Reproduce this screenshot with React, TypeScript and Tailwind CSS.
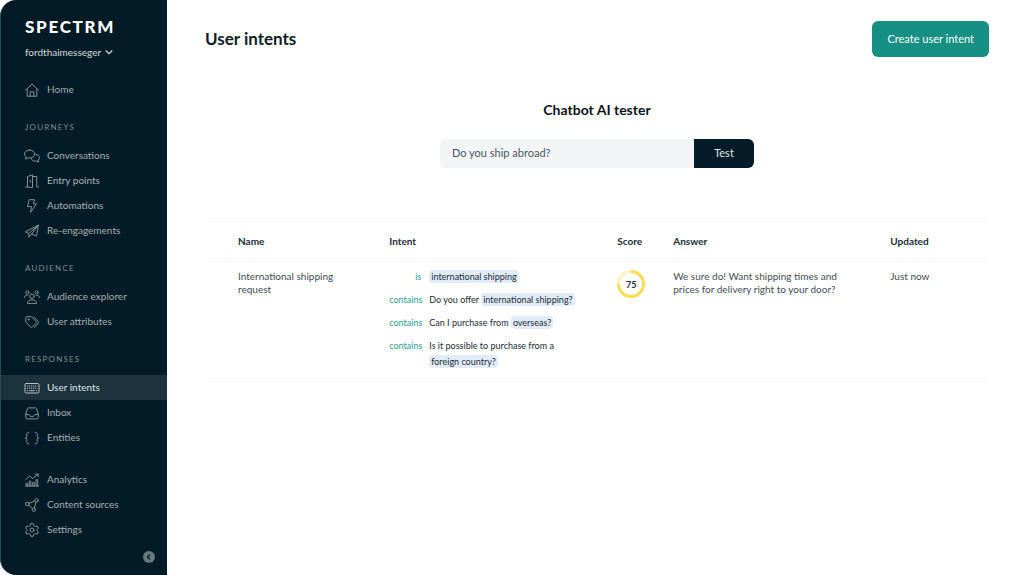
import { useState, type ReactNode } from 'react';

interface NavItem {
  label: string;
  icon: ReactNode;
}

interface NavGroup {
  title?: string;
  items: NavItem[];
}

interface Phrase {
  match: string;
  text: string;
  highlight: string;
}

const Icon = ({ children }: { children: ReactNode }) => (
  <svg
    viewBox="0 0 16 16"
    className="w-4 h-4 shrink-0 opacity-80"
    fill="none"
    stroke="currentColor"
    strokeWidth="1"
    strokeLinecap="round"
    strokeLinejoin="round"
    aria-hidden="true"
  >
    {children}
  </svg>
);

const navGroups: NavGroup[] = [
  {
    items: [
      {
        label: 'Home',
        icon: (
          <Icon>
            <path d="M1.500 8.200 8 2l6.500 6.200M3.200 7v7.200h9.600V7M6.200 14.200V9.800h3.600v4.400" />
          </Icon>
        ),
      },
    ],
  },
  {
    title: 'JOURNEYS',
    items: [
      {
        label: 'Conversations',
        icon: (
          <Icon>
            <path d="M5.500 2C2.800 2 .6 3.700 .6 6c0 1.200.6 2.200 1.500 2.900L1.600 11.200l2.500-1.400c.5.100.9.200 1.400.200 2.800 0 5-1.800 5-4s-2.200-4-5-4Z" />
            <path d="M11.800 6.300c2.100.2 3.700 1.600 3.700 3.300 0 1-.5 1.800-1.300 2.500l.4 2-2.200-1.100c-2.600.5-4.900-.7-5.300-2.500" />
          </Icon>
        ),
      },
      {
        label: 'Entry points',
        icon: (
          <Icon>
            <path d="M1.500 14h2V3.500l5-1.700v12.700L3.500 14M8.500 3.500h4.300V14h1.700M6.300 7.500v1.600" />
          </Icon>
        ),
      },
      {
        label: 'Automations',
        icon: (
          <Icon>
            <path d="M5.500 1.700h5L9.300 5.800h3.200L6.500 14.300l1-5.700H3.800Z" />
          </Icon>
        ),
      },
      {
        label: 'Re-engagements',
        icon: (
          <Icon>
            <path d="M14.300 2.200 1.300 8.800l3.500 1.700L14.300 2.200 12.600 13l-5-2M4.800 10.500v3.700l2.800-3.200 6.700-8.800" />
          </Icon>
        ),
      },
    ],
  },
  {
    title: 'AUDIENCE',
    items: [
      {
        label: 'Audience explorer',
        icon: (
          <Icon>
            <circle cx="8" cy="7.200" r="2.300" />
            <path d="M3.500 14.200c0-2.300 1.800-3.300 4.500-3.300s4.500 1 4.500 3.300Z" />
            <circle cx="3.300" cy="3.500" r="1.600" />
            <circle cx="12.700" cy="3.500" r="1.600" />
            <path d="M.5 8.500c0-1.700 1.200-2.400 3.200-2.400M15.500 8.500c0-1.700-1.200-2.400-3.200-2.400" />
          </Icon>
        ),
      },
      {
        label: 'User attributes',
        icon: (
          <Icon>
            <path d="M1.700 3.800c0-.7.500-1.200 1.200-1.200h3.800c.4 0 .8.200 1.100.5l4.200 4.200c.6.600.6 1.500 0 2.100l-3.400 3.400c-.6.600-1.500.6-2.100 0L2.200 8.500c-.3-.3-.5-.7-.5-1.100Z" />
            <path d="M9.700 2.900l4.300 4.300c.7.700.7 1.700 0 2.400l-3.700 3.700" />
            <circle cx="4.500" cy="5.400" r=".6" />
          </Icon>
        ),
      },
    ],
  },
  {
    title: 'RESPONSES',
    items: [
      {
        label: 'User intents',
        icon: (
          <Icon>
            <rect x="1" y="3.500" width="14" height="9.500" rx="1.200" />
            <path strokeLinecap="butt" strokeDasharray="1.200 .8" d="M3 6h10.200M3 8.200h10.200" />
            <path d="M3.300 10.700h.4M5.800 10.700h4.400M12.400 10.700h.4" />
          </Icon>
        ),
      },
      {
        label: 'Inbox',
        icon: (
          <Icon>
            <path d="M1.700 9.500 3.300 3.700c.2-.5.600-.8 1.100-.8h7.200c.5 0 .9.300 1.100.8l1.600 5.800v3.200c0 .7-.5 1.200-1.200 1.200H2.900c-.7 0-1.200-.5-1.200-1.200ZM1.700 9.500h3.200c.3 1.200 1.500 2 3.100 2s2.800-.8 3.100-2h3.200" />
          </Icon>
        ),
      },
      {
        label: 'Entities',
        icon: (
          <Icon>
            <path d="M5 2.200c-1.600 0-2.200.6-2.200 1.900v2.300c0 1-.6 1.600-1.900 1.600 1.300 0 1.900.6 1.900 1.600v2.300c0 1.300.6 1.900 2.200 1.900M11 2.200c1.600 0 2.200.6 2.200 1.900v2.300c0 1 .6 1.600 1.900 1.600-1.300 0-1.900.6-1.900 1.600v2.300c0 1.300-.6 1.900-2.200 1.900" />
          </Icon>
        ),
      },
    ],
  },
  {
    items: [
      {
        label: 'Analytics',
        icon: (
          <Icon>
            <path d="M1.800 7.500 5.700 4l3 2.500 5.500-4.300M11.500 2.200h2.700v2.500" />
            <path d="M2 14v-2.700h1.600V14M5.200 14V9.200h1.600V14M8.700 14v-3.500h1.600V14M12 14V7.700h1.700V14M1.500 14h13" />
          </Icon>
        ),
      },
      {
        label: 'Content sources',
        icon: (
          <Icon>
            <circle cx="3.200" cy="7" r="1.800" />
            <circle cx="12.500" cy="3.500" r="1.700" />
            <circle cx="9.800" cy="12.700" r="1.700" />
            <path d="M4.900 6.400 10.900 4M4.600 8.200l3.900 3.300M12 5.200l-1.700 5.900" />
          </Icon>
        ),
      },
      {
        label: 'Settings',
        icon: (
          <Icon>
            <path d="M6.700 1.700h2.600l.5 1.900 1.400.8 1.900-.5 1.300 2.200-1.400 1.400v1l1.400 1.400-1.300 2.200-1.900-.5-1.400.8-.5 1.900H6.700l-.5-1.900-1.400-.8-1.900.5-1.300-2.200L3 8.500v-1L1.600 6.100l1.300-2.200 1.900.5 1.400-.8Z" />
            <circle cx="8" cy="8" r="2" />
          </Icon>
        ),
      },
    ],
  },
];

const phrases: Phrase[] = [
  { match: 'is', text: '', highlight: 'international shipping' },
  { match: 'contains', text: 'Do you offer', highlight: 'international shipping?' },
  { match: 'contains', text: 'Can I purchase from', highlight: 'overseas?' },
  { match: 'contains', text: 'Is it possible to purchase from a', highlight: 'foreign country?' },
];

function ScoreRing({ score }: { score: number }) {
  return (
    <div className="relative w-7 h-7">
      <svg viewBox="0 0 28 28" className="w-7 h-7 -rotate-90" fill="none" strokeWidth="3" aria-hidden="true">
        <circle cx="14" cy="14" r="12.500" stroke="#fdf3c7" />
        <circle cx="14" cy="14" r="12.500" stroke="#fbdc55" pathLength="100" strokeDasharray={`${score} 100`} />
      </svg>
      <span className="absolute inset-0 flex items-center justify-center text-[9px] font-bold text-[#1b2b36]">
        {score}
      </span>
    </div>
  );
}

function Sidebar() {
  const [active, setActive] = useState('User intents');

  return (
    <aside className="w-[167px] shrink-0 flex flex-col bg-[#031b26] border-l border-[#2b4c57] rounded-l-2xl text-[#a3afb5]">
      <div className="pl-6 pt-4">
        <div className="text-[17px] leading-[22px] font-black tracking-widest text-white">SPECTRM</div>
        <button className="mt-1 flex items-center gap-1 text-[10px] leading-5 text-[#d5dbde]">
          fordthaimesseger
          <svg viewBox="0 0 8 8" className="w-2 h-2" fill="none" stroke="currentColor" strokeWidth="1.200" aria-hidden="true">
            <path d="M.7 2.500 4 5.700l3.300-3.200" />
          </svg>
        </button>
      </div>

      <nav className="mt-[15px]">
        {navGroups.map((group, index) => (
          <div key={index} className={index === navGroups.length - 1 ? 'mt-[17px]' : ''}>
            {group.title && (
              <h2 className="pl-6 pt-[17px] pb-2 text-[8px] leading-4 tracking-[0.15em] text-[#7d8d95]">
                {group.title}
              </h2>
            )}
            {group.items.map((item) => (
              <button
                key={item.label}
                onClick={() => setActive(item.label)}
                className={`w-full h-[25px] pl-[23px] flex items-center gap-[7px] text-[10px] ${
                  active === item.label ? 'bg-[#1c323d] text-[#dfe4e6]' : ''
                }`}
              >
                {item.icon}
                {item.label}
              </button>
            ))}
          </div>
        ))}
      </nav>

      <div className="flex justify-end pr-3 pt-[9px] pb-3">
        <button
          aria-label="Collapse sidebar"
          className="w-3 h-3 rounded-full bg-[#69777e] text-[#031b26] flex items-center justify-center"
        >
          <svg viewBox="0 0 8 8" className="w-2 h-2" fill="none" stroke="currentColor" strokeWidth="1.300" aria-hidden="true">
            <path d="M5 1.500 2.500 4 5 6.500" />
          </svg>
        </button>
      </div>
    </aside>
  );
}

export default function App() {
  const [question, setQuestion] = useState('Do you ship abroad?');

  return (
    <div className="min-h-screen flex bg-white font-['Lato','Liberation_Sans',sans-serif] text-[#1b2b36]">
      <Sidebar />

      <main className="flex-1 min-w-0 pt-[21px] pl-[38px] pr-[35px]">
        {/* Header */}
        <header className="flex items-center justify-between">
          <h1 className="text-[17px] font-bold text-[#101d25]">User intents</h1>
          <button className="h-9 px-[15px] rounded-md bg-[#168f84] text-[11px] text-white">
            Create user intent
          </button>
        </header>

        {/* Tester */}
        <section className="mt-[43px] flex flex-col items-center">
          <h2 className="text-[14px] leading-5 font-bold text-[#0b1319]">Chatbot AI tester</h2>
          <form className="mt-[19px] flex w-full max-w-[314px] h-[29px]" onSubmit={(e) => e.preventDefault()}>
            <input
              type="text"
              aria-label="Question"
              value={question}
              onChange={(e) => setQuestion(e.target.value)}
              className="flex-1 min-w-0 px-3 rounded-l-md bg-[#f2f4f6] text-[11px] text-[#4a565e] focus:outline-none"
            />
            <button type="submit" className="w-[60px] rounded-r-md bg-[#051c28] text-[11px] text-[#dfe4e6]">
              Test
            </button>
          </form>
        </section>

        {/* Intents table */}
        <div className="mt-[53px] px-[3px]">
          <table className="w-full table-fixed text-left text-[10px] leading-[13px]">
            <thead>
              <tr className="h-10 border-y border-[#f3f5f6]">
                <th className="w-[23.300%] pl-[30px] font-bold">Name</th>
                <th className="w-[29.300%] font-bold">Intent</th>
                <th className="w-[7.200%] font-bold">Score</th>
                <th className="w-[27.900%] font-bold">Answer</th>
                <th className="font-bold">Updated</th>
              </tr>
            </thead>
            <tbody>
              <tr className="border-b border-[#f3f5f6] align-top text-[#3f4c55]">
                <td className="pl-[30px] pr-10 pt-2">International shipping request</td>
                <td className="pt-[7px] pb-2">
                  <ul className="flex flex-col gap-[7px] text-[9px] leading-4">
                    {phrases.map((phrase) => (
                      <li key={phrase.highlight} className="flex gap-2">
                        <span className="w-8 shrink-0 text-right text-[#2c9c93]">{phrase.match}</span>
                        <span className="max-w-[150px] text-[#1b2b36]">
                          {phrase.text}{' '}
                          <span className="px-[2px] py-px rounded-sm bg-[#e1ebfa] whitespace-nowrap">
                            {phrase.highlight}
                          </span>
                        </span>
                      </li>
                    ))}
                  </ul>
                </td>
                <td className="pt-2">
                  <ScoreRing score={75} />
                </td>
                <td className="pr-10 pt-2">
                  We sure do! Want shipping times and prices for delivery right to your door?
                </td>
                <td className="pt-2">Just now</td>
              </tr>
            </tbody>
          </table>
        </div>
      </main>
    </div>
  );
}
